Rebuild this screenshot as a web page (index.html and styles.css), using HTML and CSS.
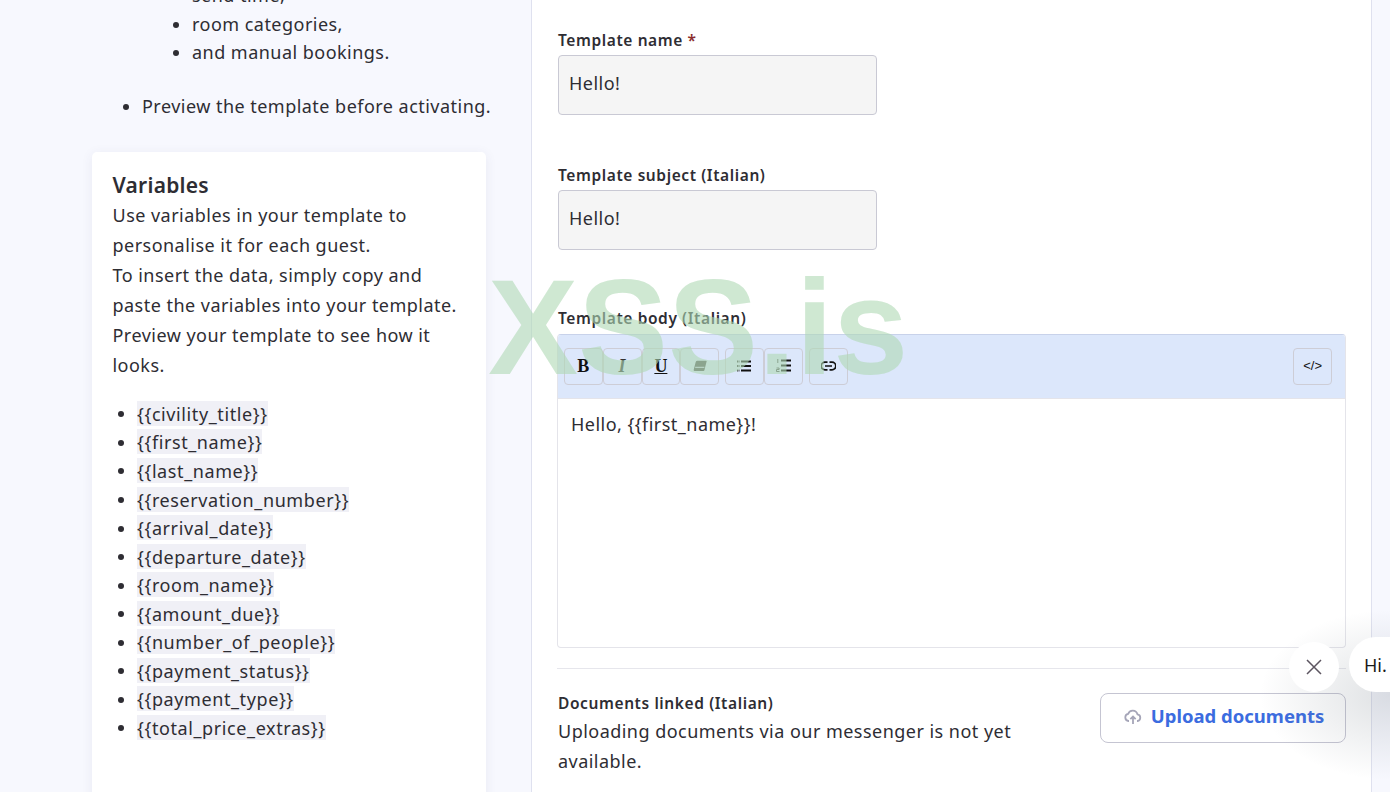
FILE: index.html
```html
<!DOCTYPE html>
<html lang="en">
<head>
<meta charset="utf-8">
<title>Template</title>
<link rel="stylesheet" href="styles.css">
</head>
<body>
<div class="page">
  <aside class="side">
    <ul class="help">
      <li class="cut">
        <ul class="help-sub">
          <li>send time,</li>
          <li>room categories,</li>
          <li>and manual bookings.</li>
        </ul>
      </li>
      <li>Preview the template before activating.</li>
    </ul>
    <section class="card">
      <h3 class="card-title">Variables</h3>
      <p class="card-text">Use variables in your template to personalise it for each guest.<br>To insert the data, simply copy and paste the variables into your template.<br>Preview your template to see how it looks.</p>
      <ul class="vars">
        <li><code>{{civility_title}}</code></li>
        <li><code>{{first_name}}</code></li>
        <li><code>{{last_name}}</code></li>
        <li><code>{{reservation_number}}</code></li>
        <li><code>{{arrival_date}}</code></li>
        <li><code>{{departure_date}}</code></li>
        <li><code>{{room_name}}</code></li>
        <li><code>{{amount_due}}</code></li>
        <li><code>{{number_of_people}}</code></li>
        <li><code>{{payment_status}}</code></li>
        <li><code>{{payment_type}}</code></li>
        <li><code>{{total_price_extras}}</code></li>
      </ul>
    </section>
  </aside>
  <main class="panel">
    <div class="field">
      <label class="label">Template name <span class="req">*</span></label>
      <div class="input">Hello!</div>
    </div>
    <div class="field field-last">
      <label class="label">Template subject (Italian)</label>
      <div class="input">Hello!</div>
    </div>
    <div class="field-body">
      <label class="label label-body">Template body (Italian)</label>
      <div class="editor">
        <div class="toolbar">
          <div class="group">
            <button class="tool t-b">B</button>
            <button class="tool t-i">I</button>
            <button class="tool t-u">U</button>
            <button class="tool"><svg width="14" height="12" viewBox="0 0 14 12"><path d="M4.500.800h8.500a.6.6 0 0 1 .6.8l-2.200 8.600a1 1 0 0 1-1 .8H1.700a1 1 0 0 1-1-1.200l2-7.800A1.800 1.800 0 0 1 4.500.800z" fill="#555"/><path d="M2.200 7.300h9.200" stroke="#dbe6fb" stroke-width="1"/></svg></button>
          </div>
          <div class="group">
            <button class="tool"><svg width="14" height="12" viewBox="0 0 14 12"><path d="M4 1.500h10M4 6h10M4 10.500h10" stroke="#111" stroke-width="1.800"/><path d="M0 1.500h2.500M0 6h2.500M0 10.500h2.500" stroke="#444" stroke-width="1.800" stroke-dasharray="1 .5"/></svg></button>
            <button class="tool"><svg width="15" height="13" viewBox="0 0 15 13"><path d="M5 1.500h10M5 6.500h10M5 11.500h10" stroke="#111" stroke-width="1.800"/><path d="M1.800 0v4M.5 9h2.600v1.500H.5V12.500h3" fill="none" stroke="#444" stroke-width=".9"/></svg></button>
          </div>
          <div class="group">
            <button class="tool t-link"><svg width="15" height="10" viewBox="0 0 15 10"><path d="M6.500 1.200H4a3.800 3.800 0 0 0 0 7.600h2.500M8.500 1.200H11a3.800 3.800 0 0 1 0 7.600H8.500M4 5h7" fill="none" stroke="#111" stroke-width="1.700"/></svg></button>
          </div>
          <button class="tool t-code">&lt;/&gt;</button>
        </div>
        <div class="edit-area">Hello, {{first_name}}!</div>
      </div>
    </div>
    <div class="docs">
      <div class="docs-info">
        <div class="docs-title">Documents linked (Italian)</div>
        <p class="docs-text">Uploading documents via our messenger is not yet available.</p>
      </div>
      <button class="upload">
        <svg width="18" height="16" viewBox="0 0 20 18"><path d="M5.500 13.500H5a4 4 0 0 1-.5-7.900A5.500 5.500 0 0 1 15 6a3.800 3.800 0 0 1 0 7.500h-.5" fill="none" stroke="#a5a5b8" stroke-width="2"/><path d="M10 17V9M7 11.500l3-3 3 3" fill="none" stroke="#a5a5b8" stroke-width="2"/></svg>
        Upload documents
      </button>
    </div>
  </main>
</div>
<div class="chat-glow"></div>
<button class="chat-close"><svg width="18" height="18" viewBox="0 0 18 18"><path d="M2 2l14 14M16 2L2 16" stroke="#5c5560" stroke-width="1.500"/></svg></button>
<div class="chat-bubble">Hi.</div>
<div class="watermark">XSS.is</div>
</body>
</html>
```
FILE: styles.css
```css
* { box-sizing: border-box; }
html, body { margin: 0; height: 100%; overflow: hidden; }
body {
  background: #f7f8fe;
  color: #2e2d33;
  font-family: "Noto Sans", "Open Sans", sans-serif;
  font-size: 18px;
  line-height: 30px;
  letter-spacing: .47px;
}
.page {
  display: grid;
  grid-template-columns: 531px 841px;
  height: 792px;
  overflow: hidden;
}
.side { padding: 0 45px 0 92px; margin-top: -19px; }
.help { margin: 0 -20px 32px 0; padding-left: 50px; line-height: 28.6px; }
.help-sub { margin: 0 0 25px; padding-left: 50px; list-style: disc; }
.cut { list-style: none; }
.card {
  background: #fff;
  border-radius: 5px;
  box-shadow: 0 2px 12px rgba(60, 70, 110, .08);
  padding: 18px 21px 60px 20.500px;
  height: 700px;
}
.card-title { margin: 0; font-size: 21px; font-weight: 600; line-height: 30px; letter-spacing: .25px; }
.card-text { margin: 0 0 19px; }
.vars { margin: 0; padding-left: 24.500px; line-height: 28.55px; }
.vars code { font: inherit; letter-spacing: .6px; background: #f0f0f6; padding: .5px 0; }
.panel {
  background: #fff;
  border-left: 1px solid #dfe1ef;
  border-right: 1px solid #dfe1ef;
  padding: 27px 25px 0 26px;
}
.field { margin-bottom: 47px; }
.field-last { margin-bottom: 56px; }
.label { display: block; font-size: 15.500px; font-weight: 600; line-height: 26px; margin-bottom: 2px; letter-spacing: .6px; }
.label-body { margin-bottom: 3px; margin-left: 1px; }
.req { color: #8b2d2d; }
.input {
  width: 319px;
  height: 60px;
  margin-left: -.5px;
  background: #f5f5f5;
  border: 1px solid #c9c9d4;
  border-radius: 4px;
  padding: 12px 10.500px;
}
.field-body { margin-top: -1px; padding-bottom: 20px; border-bottom: 1px solid #e6e6ec; margin-left: -1px; }
.editor { border: 1px solid #e4e4ea; border-top-color: #c8d2ea; border-radius: 4px; overflow: hidden; }
.toolbar {
  display: flex;
  gap: 6px;
  background: #dce7fb;
  height: 64px;
  padding: 13px 13px 0 6px;
  border-bottom: 1px solid #e4e4ea;
}
.group { display: flex; }
.tool {
  width: 38.750px;
  height: 37px;
  padding: 0 0 2px;
  background: transparent;
  border: 1px solid #cdcdd6;
  border-radius: 4px;
  color: #111;
  font: 700 18px/1 "Liberation Serif", serif;
  display: flex;
  align-items: center;
  justify-content: center;
}
.t-i { font-style: italic; color: #333; }
.t-u { text-decoration: underline; }
.t-link { width: 39.500px; }
.t-code { margin-left: auto; font: 400 13px/1 "Liberation Sans", sans-serif; }
.edit-area { height: 248px; padding: 10px 13px; }
.docs { display: flex; justify-content: space-between; padding-top: 21px; }
.docs-title { font-size: 15.500px; font-weight: 600; line-height: 26px; letter-spacing: .6px; }
.docs-info { width: 480px; }
.docs-text { margin: 0; }
.upload {
  width: 246px;
  height: 50px;
  margin-top: 3px;
  background: #fff;
  border: 1px solid #c5c5d2;
  border-radius: 8px;
  color: #3b6ce0;
  font: 700 18.500px/1 "Noto Sans", sans-serif;
  display: flex;
  align-items: center;
  justify-content: center;
  gap: 9px;
  padding: 0 0 3px 2px;
}
.chat-glow {
  position: absolute;
  left: 1240px;
  top: 610px;
  width: 150px;
  height: 170px;
  background: radial-gradient(ellipse 130px 85px at 100% 50%, rgba(110,120,130,.22), rgba(110,120,130,0));
}
.chat-close {
  position: absolute;
  left: 1289px;
  top: 642px;
  width: 50px;
  height: 50px;
  border: 0;
  padding: 0;
  border-radius: 50%;
  background: #fff;
  display: flex;
  align-items: center;
  justify-content: center;
}
.chat-bubble {
  position: absolute;
  left: 1349px;
  top: 637px;
  width: 41px;
  height: 55px;
  border-radius: 27px 0 0 27px;
  background: #fff;
  padding: 14px 0 14px 15px;
  color: #1a1a1a;
  line-height: 28px;
  letter-spacing: 0;
}
.watermark {
  position: absolute;
  left: 488px;
  top: 243px;
  font: 700 135px/170px "Liberation Sans", sans-serif;
  letter-spacing: 0;
  color: rgba(175, 217, 180, .6);
  pointer-events: none;
}
```
